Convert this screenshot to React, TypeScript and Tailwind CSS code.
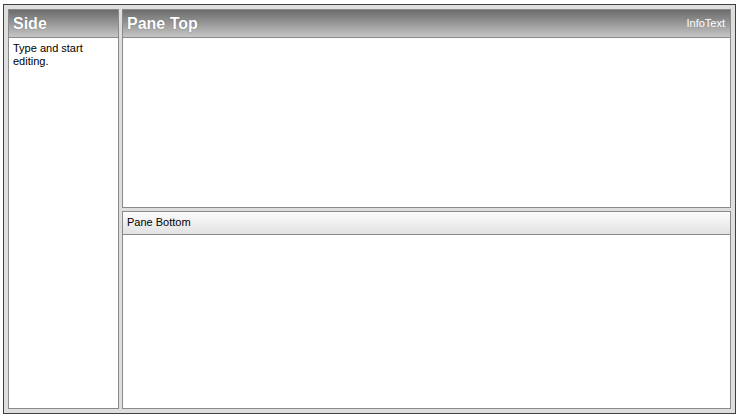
import React from "react";

const font = { fontFamily: '"Liberation Sans", Arial, sans-serif' };

interface HeaderProps {
  title: string;
  info?: string;
}

const DarkHeader: React.FC<HeaderProps> = ({ title, info }) => (
  <div className="flex h-[28px] shrink-0 items-center justify-between border-b border-[#8a8a8a] bg-gradient-to-b from-[#6c6c6c] to-[#c6c6c6] px-[4px]">
    <span className="text-[16px] font-bold leading-none text-white [text-shadow:0_0_1px_#555]">
      {title}
    </span>
    {info && <span className="pr-[1px] text-[11px] leading-none text-white">{info}</span>}
  </div>
);

export default function App() {
  return (
    <div className="h-[418px] w-[737px] bg-white pl-[3px] pt-[4px]" style={font}>
      <div className="flex h-[410px] w-[733px] gap-[3px] border border-[#404040] bg-[#dedede] p-[4px]">
        <section className="flex w-[111px] shrink-0 flex-col border border-[#8a8a8a] bg-white">
          <DarkHeader title="Side" />
          <p className="px-[4px] pt-[4px] text-[11px] leading-[13px] text-black">
            Type and start editing.
          </p>
        </section>

        <div className="flex flex-1 flex-col gap-[3px]">
          <section className="flex flex-1 flex-col border border-[#8a8a8a] bg-white">
            <DarkHeader title="Pane Top" info="InfoText" />
          </section>

          <section className="flex flex-1 flex-col border border-[#8a8a8a] bg-white">
            <div className="flex h-[23px] shrink-0 items-center border-b border-[#8a8a8a] bg-gradient-to-b from-[#fcfcfc] to-[#e2e2e2] px-[4px]">
              <span className="text-[11px] leading-none text-black">Pane Bottom</span>
            </div>
          </section>
        </div>
      </div>
    </div>
  );
}
